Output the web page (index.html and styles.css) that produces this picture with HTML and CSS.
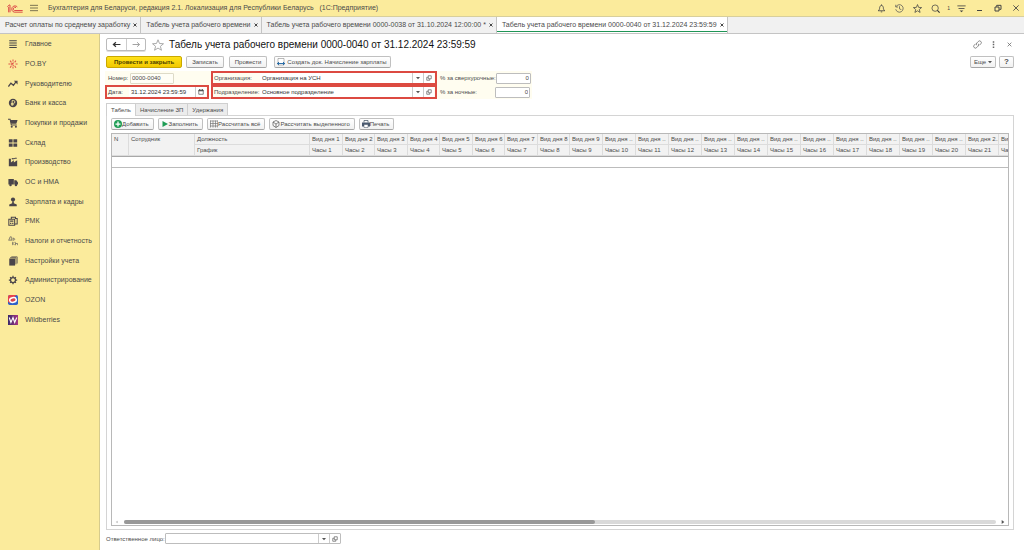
FILE: index.html
```html
<!DOCTYPE html>
<html lang="ru">
<head>
<meta charset="utf-8">
<title>Табель учета рабочего времени</title>
<link rel="stylesheet" href="styles.css">
</head>
<body>
<svg class="defs" aria-hidden="true">
  <symbol id="open" viewBox="0 0 12 12"><path d="M4.500 1.500h6v6h-6zM4.500 4.500h-3v6h6v-3" fill="none" stroke="#555" stroke-width="1.300"/></symbol>
  <symbol id="down" viewBox="0 0 6 6"><path d="M0 1.500h6L3 5z" fill="#555"/></symbol>
  <symbol id="x" viewBox="0 0 8 8"><path d="M1 1l6 6M7 1L1 7" stroke="currentColor" stroke-width="1.800"/></symbol>
  <symbol id="star" viewBox="0 0 24 24"><path d="M12 1.500l3 7.500 8 .5-6.200 5.100 2.100 7.900-6.900-4.400-6.900 4.400 2.100-7.900L1 9.500 9 9z" fill="none" stroke="currentColor" stroke-width="2"/></symbol>
</svg>
<header class="titlebar">
  <svg class="logo" viewBox="0 0 48 27"><path d="M1 8l6-5h2v22M5 9v16" fill="none" stroke="#d8343c" stroke-width="2.600"/><path d="M31 9a9.500 9.500 0 1 0-9 15.500h25M27 11a5 5 0 1 0-5 8.500h25" fill="none" stroke="#d8343c" stroke-width="2.600"/></svg>
  <button class="icon-btn burger" aria-label="Меню"><svg viewBox="0 0 9 8"><path d="M0 1h9M0 4h9M0 7h9" stroke="#6b6548"/></svg></button>
  <span class="app-name">Бухгалтерия для Беларуси, редакция 2.1. Локализация для Республики Беларусь&nbsp;&nbsp; (1С:Предприятие)</span>
  <div class="title-tools">
    <button class="icon-btn" aria-label="Уведомления"><svg viewBox="0 0 24 24"><path d="M3 18c3-2 4-4 4-8 0-3 2-6 5-6s5 3 5 6c0 4 1 6 4 8zM10 21h4M12 4V1" fill="none" stroke="#444" stroke-width="2.200"/></svg></button>
    <button class="icon-btn" aria-label="История"><svg viewBox="0 0 24 24"><path d="M3 7a10 10 0 1 1-1 7M2 2v6h6M12 6v7l5 2" fill="none" stroke="#555" stroke-width="2"/></svg></button>
    <button class="icon-btn" aria-label="Избранное"><svg><use href="#star"/></svg></button>
    <button class="icon-btn" aria-label="Поиск"><svg viewBox="0 0 24 24"><circle cx="11" cy="11" r="8.500" fill="none" stroke="#444" stroke-width="2"/><path d="M17 17l6 6" stroke="#333" stroke-width="3"/></svg></button>
    <span class="count">1</span>
    <button class="icon-btn" aria-label="Сервис"><svg viewBox="0 0 24 24"><path d="M1 5h22M4 12h16" stroke="#444" stroke-width="2.200"/><path d="M7 17h10l-5 5z" fill="#444"/></svg></button>
    <button class="icon-btn win" aria-label="Свернуть"><svg viewBox="0 0 8 8"><path d="M1 6.500h5" stroke="#444"/></svg></button>
    <button class="icon-btn win" aria-label="Окно"><svg viewBox="0 0 12 12"><path d="M1.500 4.500h6v6h-6zM4 4V2h6.500v6H8" fill="none" stroke="#444" stroke-width="1.500"/></svg></button>
    <button class="icon-btn win" aria-label="Закрыть программу"><svg viewBox="0 0 12 12"><path d="M2 2l8 8M10 2l-8 8" stroke="#444" stroke-width="1.300"/></svg></button>
  </div>
</header>
<nav class="tabs" aria-label="Открытые окна">
  <div class="tab"><a href="#">Расчет оплаты по среднему заработку</a><button aria-label="Закрыть"><svg><use href="#x"/></svg></button></div>
  <div class="tab"><a href="#">Табель учета рабочего времени</a><button aria-label="Закрыть"><svg><use href="#x"/></svg></button></div>
  <div class="tab"><a href="#">Табель учета рабочего времени 0000-0038 от 31.10.2024 12:00:00 *</a><button aria-label="Закрыть"><svg><use href="#x"/></svg></button></div>
  <div class="tab active"><a href="#">Табель учета рабочего времени 0000-0040 от 31.12.2024 23:59:59</a><button aria-label="Закрыть"><svg><use href="#x"/></svg></button></div>
</nav>
<div class="workspace">
  <nav class="sidebar" aria-label="Разделы">
    <a href="#"><svg viewBox="0 0 24 24"><path d="M3 4h18M3 9.500h18M3 15h18M3 20.500h18" stroke="#444" stroke-width="2.500"/></svg>Главное</a>
    <a href="#"><svg viewBox="0 0 24 24"><path d="M12 1v5M5 4l3 4M19 4l-3 4M1 12h5M18 12h5M5 21l3-5M19 21l-3-5M12 18v5M9 9v6M9 12l5-3M9 12l5 4" fill="none" stroke="#e0574a" stroke-width="2.500"/></svg>PO.BY</a>
    <a href="#"><svg viewBox="0 0 24 24"><path d="M1 18l6-8 6 5 6-8" fill="none" stroke="#4a454a" stroke-width="3"/><path d="M14 4h9v9z" fill="#4a454a"/></svg>Руководителю</a>
    <a href="#"><svg viewBox="0 0 24 24"><circle cx="12" cy="12" r="10" fill="#4a454a"/><path d="M10 19V6h3a3.500 3.500 0 0 1 0 7H7M7 16h7" fill="none" stroke="#faec9b" stroke-width="2"/></svg>Банк и касса</a>
    <a href="#"><svg viewBox="0 0 24 24"><path d="M0 3h5l3 14h13" fill="none" stroke="#4a454a" stroke-width="2.500"/><path d="M5 5h18l-3 9H8z" fill="#4a454a"/><circle cx="9" cy="21" r="2.500" fill="#4a454a"/><circle cx="19" cy="21" r="2.500" fill="#4a454a"/></svg>Покупки и продажи</a>
    <a href="#"><svg viewBox="0 0 24 24"><path d="M2 3h9v8H2zM13 3h9v8h-9zM2 13h9v8H2zM13 13h9v8h-9z" fill="#4a454a"/></svg>Склад</a>
    <a href="#"><svg viewBox="0 0 24 24"><path d="M2 22V4h5v9l7-5v5l8-5v14z" fill="#4a454a"/><path d="M9 5c3-3 5 1 8-2h4" fill="none" stroke="#4a454a" stroke-width="2.500"/></svg>Производство</a>
    <a href="#"><svg viewBox="0 0 24 24"><path d="M1 5h13v13H1zM15 8h5l4 5v5h-9z" fill="#4a454a"/><circle cx="6" cy="19" r="3" fill="#4a454a"/><circle cx="19" cy="19" r="3" fill="#4a454a"/></svg>ОС и НМА</a>
    <a href="#"><svg viewBox="0 0 24 24"><circle cx="12" cy="6" r="5" fill="#4a454a"/><path d="M10 10h4v5l7 3v4H3v-4l7-3z" fill="#4a454a"/></svg>Зарплата и кадры</a>
    <a href="#"><svg viewBox="0 0 24 24"><path d="M2 8h14v14H2zM8 8V3h10v4M17 6h5v13h-5" fill="none" stroke="#4a454a" stroke-width="2.500"/><path d="M5 11h8v3H5zM5 16h3v3H5zM10 16h3v3h-3z" fill="#4a454a"/></svg>РМК</a>
    <a href="#"><svg viewBox="0 0 24 24"><path d="M2 10l3-8h3v8M1 10h9M12 4v7M12 7c1-2 3-2 4 0s-2 4-4 2M11 14v8M16 14l-4 4 4 4M18 15v7M18 18h5v4" fill="none" stroke="#6b6660" stroke-width="1.800"/></svg>Налоги и отчетность</a>
    <a href="#"><svg viewBox="0 0 24 24"><path d="M3 6h14v17H3z" fill="#4a454a"/><path d="M5 4h14v16M8 2h14v16" fill="none" stroke="#4a454a" stroke-width="1.800"/></svg>Настройки учета</a>
    <a href="#"><svg viewBox="0 0 24 24"><circle cx="12" cy="12" r="6" fill="none" stroke="#4a454a" stroke-width="3"/><path d="M12 2v4M12 18v4M2 12h4M18 12h4M5 5l3 3M16 16l3 3M19 5l-3 3M8 16l-3 3" stroke="#4a454a" stroke-width="3"/></svg>Администрирование</a>
    <a href="#"><svg viewBox="0 0 24 24"><rect width="24" height="24" rx="4" fill="#2f62c8"/><path d="M0 15V4a4 4 0 0 1 4-4h16L4 20z" fill="#e6434d"/><ellipse cx="12" cy="12" rx="8" ry="5.500" fill="#d8434c" stroke="#fff" stroke-width="3.500" transform="rotate(-12 12 12)"/></svg>OZON</a>
    <a href="#"><svg viewBox="0 0 24 24"><defs><linearGradient id="wb"><stop stop-color="#3a2a6b"/><stop offset="1" stop-color="#a63683"/></linearGradient></defs><rect width="24" height="24" fill="url(#wb)"/><path d="M3 6l4 12 5-12 4 12 5-12" fill="none" stroke="#fff" stroke-width="2.600"/></svg>Wildberries</a>
  </nav>
  <main class="document">
    <div class="heading">
      <div class="nav-pair"><button aria-label="Назад"><svg viewBox="0 0 16 12"><path d="M15 6H3M7 2L2.500 6 7 10" fill="none" stroke="#333" stroke-width="2.200"/></svg></button><button aria-label="Вперед"><svg viewBox="0 0 16 12"><path d="M1 6h12M9 2l4.500 4L9 10" fill="none" stroke="#999" stroke-width="1.600"/></svg></button></div>
      <button class="icon-btn fav" aria-label="В избранное"><svg><use href="#star"/></svg></button>
      <h1>Табель учета рабочего времени 0000-0040 от 31.12.2024 23:59:59</h1>
      <div class="heading-tools">
        <button class="icon-btn" aria-label="Ссылка"><svg viewBox="0 0 24 24"><path d="M10 14a5 5 0 0 1 0-6l4-4a4.500 4.500 0 0 1 7 6l-4 4M14 10a5 5 0 0 1 0 6l-4 4a4.500 4.500 0 0 1-7-6l4-4" fill="none" stroke="#666" stroke-width="2"/></svg></button>
        <button class="icon-btn" aria-label="Еще действия"><svg viewBox="0 0 24 24"><path d="M10 3h4v4h-4zM10 10h4v4h-4zM10 17h4v4h-4z" fill="#666"/></svg></button>
        <button class="icon-btn" aria-label="Закрыть документ"><svg viewBox="0 0 24 24"><path d="M7 7l10 10M17 7L7 17" stroke="#666" stroke-width="2"/></svg></button>
      </div>
    </div>
    <div class="commands">
      <button class="btn primary">Провести и закрыть</button>
      <button class="btn">Записать</button>
      <button class="btn post">Провести</button>
      <button class="btn create"><svg viewBox="0 0 16 16"><path d="M2 1h12v13H2z" fill="#fff" stroke="#777"/><path d="M0 11h16M4 8l-3 3 3 3M12 8l3 3-3 3" fill="none" stroke="#2d6fa8" stroke-width="2"/></svg>Создать док. Начисление зарплаты</button>
      <div class="commands-end">
        <button class="btn">Еще <svg class="caret"><use href="#down"/></svg></button>
        <button class="btn help">?</button>
      </div>
    </div>
    <form class="fields">
      <div class="field number"><label for="num">Номер:</label><input id="num" value="0000-0040"></div>
      <div class="field marked"><label for="org">Организация:</label><span class="combo"><input id="org" value="Организация на УСН"><button type="button" aria-label="Выбрать"><svg class="caret"><use href="#down"/></svg></button><button type="button" aria-label="Открыть"><svg><use href="#open"/></svg></button></span></div>
      <div class="field percent"><label for="over">% за сверхурочные:</label><input id="over" value="0"></div>
      <div class="field marked date"><label for="date">Дата:</label><span class="combo"><input id="date" value="31.12.2024 23:59:59"><button type="button" aria-label="Календарь"><svg viewBox="0 0 12 12"><path d="M1.500 2.500h9v8h-9z" fill="#fff" stroke="#444" stroke-width="1.300"/><path d="M1 3.500h10M3.500 0v3M8.500 0v3" stroke="#444" stroke-width="2"/></svg></button></span></div>
      <div class="field marked"><label for="dep">Подразделение:</label><span class="combo"><input id="dep" value="Основное подразделение"><button type="button" aria-label="Выбрать"><svg class="caret"><use href="#down"/></svg></button><button type="button" aria-label="Открыть"><svg><use href="#open"/></svg></button></span></div>
      <div class="field percent"><label for="night">% за ночные:</label><input id="night" value="0"></div>
    </form>
    <div class="page-tabs" role="tablist">
      <button role="tab" aria-selected="true">Табель</button><button role="tab" aria-selected="false">Начисление ЗП</button><button role="tab" aria-selected="false">Удержания</button>
    </div>
    <section class="panel">
      <div class="table-tools">
        <button class="btn"><svg viewBox="0 0 16 16"><circle cx="8" cy="8" r="8" fill="#1f9d55"/><path d="M8 3v10M3 8h10" stroke="#fff" stroke-width="2.500"/></svg>Добавить</button>
        <button class="btn fill"><svg viewBox="0 0 16 16"><path d="M3 2l11 6-11 6z" fill="#1f9d55"/></svg>Заполнить</button>
        <button class="btn"><svg viewBox="0 0 16 16"><path d="M0 2h16M0 7h16M0 12h16M1 1v14M6 1v14M11 1v14M15.500 1v14" stroke="#777" stroke-width="1.400"/></svg>Рассчитать всё</button>
        <button class="btn"><svg viewBox="0 0 16 16"><path d="M8 1l6 3v7l-6 4-6-4V4zM2 4l6 4 6-4M8 8v7" fill="none" stroke="#555" stroke-width="1.400"/></svg>Рассчитать выделенного</button>
        <button class="btn"><svg viewBox="0 0 16 16"><path d="M4 5V1h8v4" fill="#fff" stroke="#456" stroke-width="1.500"/><path d="M0 5h16v8H0z" fill="#4a5a70"/><path d="M4 9h8v6H4z" fill="#fff" stroke="#456"/></svg>Печать</button>
      </div>
      <div class="grid-box">
        <div class="grid-clip">
        <table>
          <colgroup><col class="c-n"><col class="c-emp"><col class="c-pos"><col class="w33"><col class="w32"><col class="w33"><col class="w32"><col class="w33"><col class="w32"><col class="w33"><col class="w32"><col class="w33"><col class="w33" span="13"></colgroup>
          <thead>
            <tr><th rowspan="2">N</th><th rowspan="2">Сотрудник</th><th>Должность</th><th>Вид дня 1</th><th>Вид дня 2</th><th>Вид дня 3</th><th>Вид дня 4</th><th>Вид дня 5</th><th>Вид дня 6</th><th>Вид дня 7</th><th>Вид дня 8</th><th>Вид дня 9</th><th>Вид дня ..</th><th>Вид дня ..</th><th>Вид дня ..</th><th>Вид дня ..</th><th>Вид дня ..</th><th>Вид дня ..</th><th>Вид дня ..</th><th>Вид дня ..</th><th>Вид дня ..</th><th>Вид дня ..</th><th>Вид дня ..</th><th>Вид дня 2..</th><th>Вид дня ..</th></tr>
            <tr><th>График</th><th>Часы 1</th><th>Часы 2</th><th>Часы 3</th><th>Часы 4</th><th>Часы 5</th><th>Часы 6</th><th>Часы 7</th><th>Часы 8</th><th>Часы 9</th><th>Часы 10</th><th>Часы 11</th><th>Часы 12</th><th>Часы 13</th><th>Часы 14</th><th>Часы 15</th><th>Часы 16</th><th>Часы 17</th><th>Часы 18</th><th>Часы 19</th><th>Часы 20</th><th>Часы 21</th><th>Часы 22</th></tr>
          </thead>
          <tbody><tr><td colspan="25"></td></tr></tbody>
        </table>
        </div>
        <div class="scroll"><svg viewBox="0 0 6 6"><path d="M4 1v4L1 3z" fill="#bbb"/></svg><div class="track"><div class="thumb"></div></div><svg viewBox="0 0 6 6"><path d="M1 0v6l4-3z" fill="#555"/></svg></div>
      </div>
    </section>
    <div class="responsible"><label for="resp">Ответственное лицо:</label><span class="combo"><input id="resp"><button type="button" aria-label="Выбрать"><svg class="caret"><use href="#down"/></svg></button><button type="button" aria-label="Открыть"><svg><use href="#open"/></svg></button></span></div>
  </main>
</div>
</body>
</html>
```
FILE: styles.css
```css
* { box-sizing: border-box; }
body {
  margin: 0;
  height: 100vh;
  display: flex;
  flex-direction: column;
  font: 6px/8px "Liberation Sans", Arial, sans-serif;
  color: #4a4a4a;
  background: #fff;
  overflow: hidden;
}
button, input { font: inherit; color: inherit; margin: 0; padding: 0; }
button { border: 0; background: none; }
a { color: inherit; text-decoration: none; }
svg { display: block; flex: none; }
.defs { position: absolute; width: 0; height: 0; }

.titlebar {
  flex: none;
  height: 16px;
  display: flex;
  align-items: center;
  padding: 0 4px 0 7px;
  background: #fbeb9c;
  font-size: 7px;
}
.logo { width: 16px; height: 9px; }
.burger { margin: 0 10px 0 7px; }
.icon-btn svg { width: 9px; height: 9px; }
.burger svg { width: 8px; height: 8px; }
.title-tools { margin-left: auto; display: flex; align-items: center; gap: 9px; color: #444; }
.count { font-size: 5px; margin: 0 -2px; }
.win { margin-left: 1px; }
.win svg { width: 8px; height: 8px; }

.tabs {
  flex: none;
  height: 18px;
  display: flex;
  background: #f1f1f1;
  border-top: 1px solid #d8cf9c;
  border-bottom: 1px solid #c4c4c4;
  font-size: 7px;
}
.tab {
  display: flex;
  align-items: center;
  gap: 3px;
  padding: 0 3px 0 5px;
  border-right: 1px solid #c4c4c4;
  white-space: nowrap;
}
.tab svg { width: 4px; height: 4px; color: #333; }
.tab.active { background: #fff; box-shadow: inset 0 -1px #fff, inset 0 -2px #1f9556; }

.workspace { flex: 1; min-height: 0; display: flex; }
.sidebar {
  flex: none;
  width: 100px;
  display: flex;
  flex-direction: column;
  background: #fbeb9c;
  border-right: 1px solid #d6cb8d;
  font-size: 7px;
}
.sidebar a { flex: 0 0 20px; display: flex; align-items: center; gap: 7px; padding-left: 8px; }
.sidebar a:nth-child(3n) { flex-basis: 19px; }
.sidebar svg { width: 10px; height: 10px; }

.document { flex: 1; min-width: 0; display: flex; flex-direction: column; padding: 4px 10px 6px 6px; }
.heading { flex: none; height: 13px; display: flex; align-items: center; }
.nav-pair { display: flex; height: 13px; border: 1px solid #bbb; border-radius: 2px; box-shadow: 0 1px #ddd; }
.nav-pair button { width: 19px; display: flex; align-items: center; justify-content: center; }
.nav-pair button + button { border-left: 1px solid #ccc; }
.nav-pair svg { width: 9px; height: 7px; }
.fav { margin: 0 5px 0 6px; color: #aaa; }
.fav svg { width: 12px; height: 12px; }
h1 { margin: 0; font-size: 10px; line-height: 12px; font-weight: 400; color: #111; }
.heading-tools { margin-left: auto; display: flex; gap: 7px; }

.commands { flex: none; display: flex; gap: 4px; margin-top: 5px; }
.btn {
  height: 12px;
  display: flex;
  align-items: center;
  gap: 2px;
  padding: 0 5px;
  border: 1px solid #c0c0c0;
  border-bottom-color: #a5a5a5;
  border-radius: 2px;
  background: linear-gradient(#fff, #f1f1f1);
  white-space: nowrap;
}
.btn svg { width: 8px; height: 8px; }
.btn .caret { width: 4px; height: 4px; }
.primary { padding: 0 7px; background: linear-gradient(#ffe21a, #f2c800); border-color: #c9a800; font-weight: 700; color: #4a4000; }
.post { margin-left: 1px; }
.create { margin-left: 3px; padding: 0 3px 0 2px; }
.commands-end { margin-left: auto; display: flex; gap: 3px; }
.commands-end .btn { padding: 0 3px; }
.commands-end .help { font-size: 8px; font-weight: 700; padding: 0 4px; }

.fields { display: grid; grid-template-columns: 106px 226px 95px; margin: 3px 0 0 -1px; }
.field { height: 14px; display: flex; align-items: center; padding: 0 2px; background: #fffdf0; white-space: nowrap; }
.marked { border: 2px solid #dc4a41; padding: 0 1px; }
.marked label { flex: none; width: 46px; }
.date { margin-right: 2px; }
.date label { width: 21px; }
.marked .combo { flex: 1; height: 10px; border: 0; }
.combo { display: flex; min-width: 0; background: #fff; border: 1px solid #bdbdbd; border-radius: 1px; }
.combo input { flex: 1; min-width: 0; border: 0; padding: 0 2px; background: none; color: #333; }
.combo button { flex: none; width: 11px; display: flex; align-items: center; justify-content: center; border-left: 1px solid #ccc; }
.combo svg { width: 6px; height: 6px; }
.combo .caret { width: 4px; height: 4px; }
.number label { width: 23px; padding-left: 1px; }
.number input { width: 44px; height: 11px; border: 1px solid #dedbc8; border-radius: 1px; padding: 0 1px; background: #fffef6; }
.percent { justify-content: space-between; padding-left: 3px; }
.percent input { flex: none; width: 35px; height: 11px; border: 1px solid #bdbdbd; border-radius: 1px; padding: 0 1px; text-align: right; background: #fff; }

.page-tabs { flex: none; display: flex; margin-top: 4px; }
.page-tabs button { height: 12px; padding: 0 4px; background: #ececec; border: 1px solid #cfcfcf; border-left-width: 0; border-bottom: 0; }
.page-tabs button[aria-selected="true"] { background: #fff; border-left-width: 1px; position: relative; z-index: 1; margin-bottom: -1px; height: 13px; }
.panel { flex: 1; min-height: 0; display: flex; flex-direction: column; padding: 2px 4px 3px; border: 1px solid #d4d4d4; }
.table-tools { flex: none; display: flex; gap: 4px; margin-bottom: 3px; }
.table-tools .btn { padding: 0 4px 0 2px; gap: 0; }
.grid-box { flex: 1; min-height: 0; display: flex; flex-direction: column; justify-content: space-between; border: 1px solid #b8b8b8; }
.grid-clip { overflow: hidden; }
table { table-layout: fixed; border-collapse: separate; border-spacing: 0; width: 0; }
.c-n { width: 17px; }
.c-emp { width: 66px; }
.c-pos { width: 115px; }
.w32 { width: 32px; }
.w33 { width: 33px; }
th {
  height: 11px;
  padding: 1px 0 0 2px;
  text-align: left;
  vertical-align: top;
  font-weight: 400;
  background: #f2f2f2;
  border-right: 1px solid #dcdcdc;
  border-bottom: 1px solid #dcdcdc;
  white-space: nowrap;
  overflow: hidden;
}
td { height: 12px; padding: 0; border-top: 1px solid #a8a8a8; border-bottom: 1px solid #bcbcbc; }
.scroll { display: flex; align-items: center; gap: 5px; padding: 0 3px 1px; }
.scroll svg { width: 4px; height: 4px; }
.track { flex: 1; height: 4px; border-radius: 2px; background: #d9d9d9; }
.thumb { width: 54%; height: 4px; border-radius: 2px; background: #989898; }
.responsible { flex: none; display: flex; align-items: center; margin-top: 3px; }
.responsible .combo { width: 176px; height: 11px; }
```
